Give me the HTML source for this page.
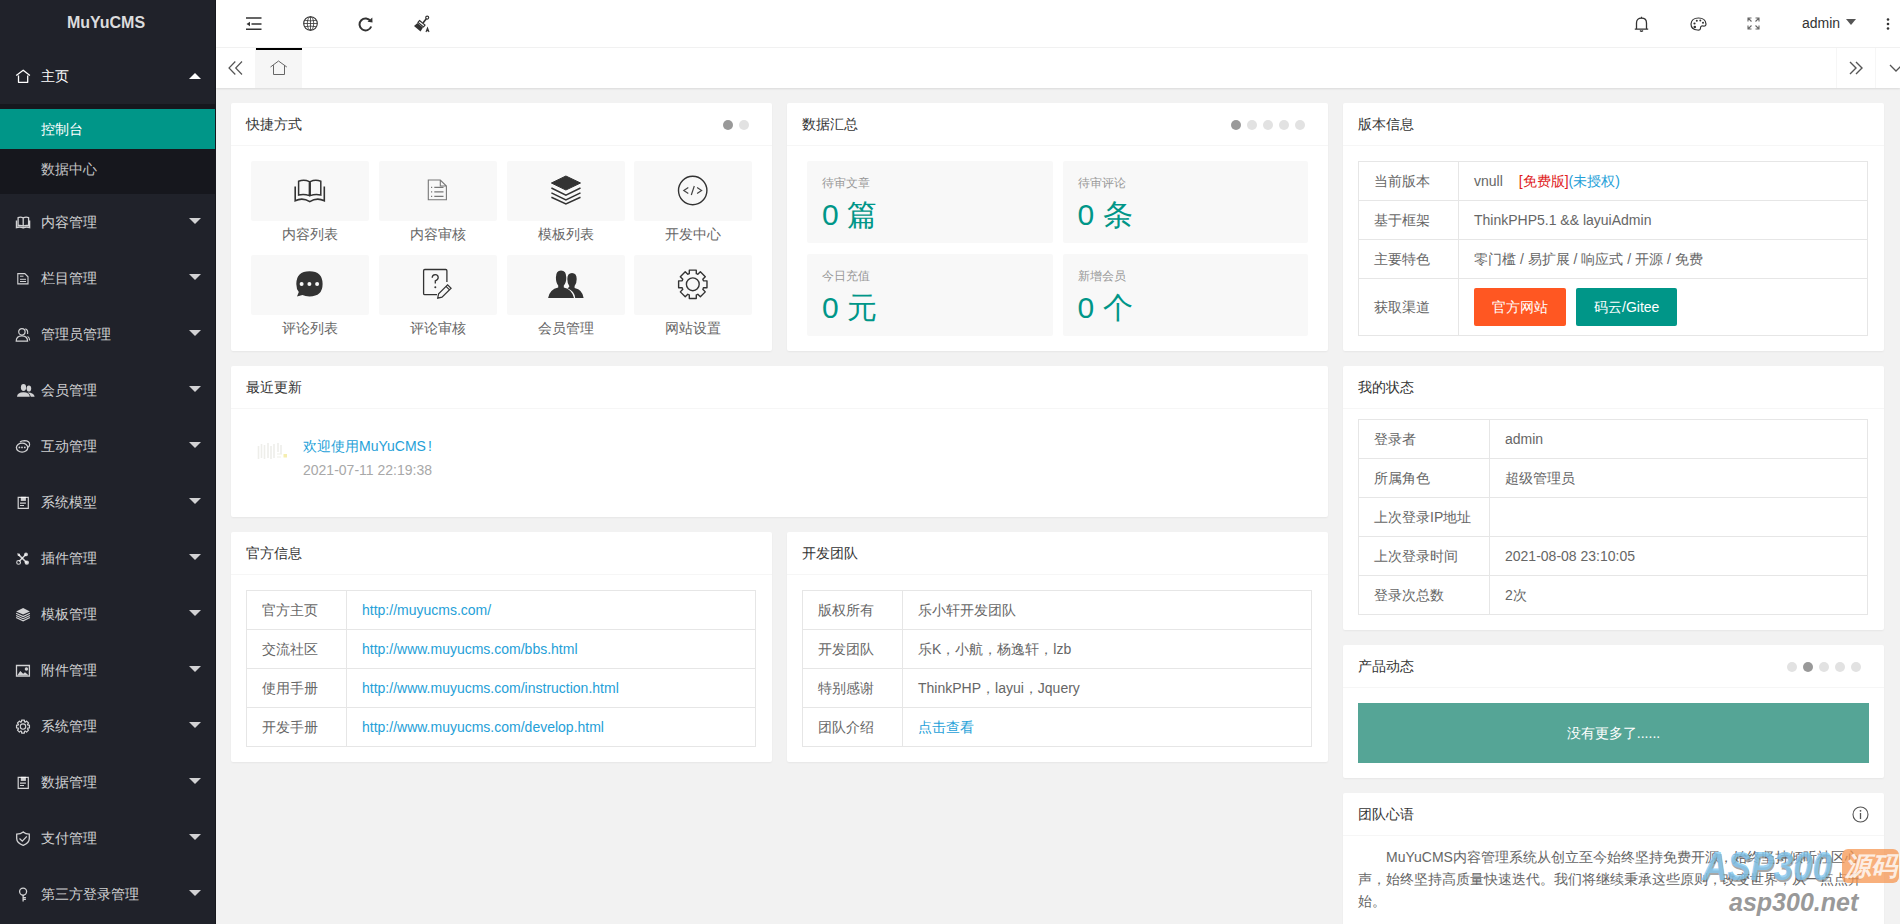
<!DOCTYPE html><html><head><meta charset="utf-8"><title>MuYuCMS</title><style>
*{margin:0;padding:0;box-sizing:border-box}
html,body{width:1900px;height:924px;overflow:hidden;background:#f2f2f2;font-family:"Liberation Sans",sans-serif;font-size:14px;color:#333}
svg{display:block}
#side{position:absolute;left:0;top:0;width:216px;height:924px;background:#20222a}
#sideedge{position:absolute;left:215px;top:0;width:1px;height:924px;background:#17181d}
#logo{position:absolute;left:0;top:0;width:212px;height:48px;line-height:45px;text-align:center;color:rgba(255,255,255,.85);font-weight:bold;font-size:16px}
.nav{position:absolute;left:0;width:215px;height:56px;line-height:56px;color:rgba(255,255,255,.8);font-size:14px}
.nav .t{position:absolute;left:41px;top:0}
.nav .ic{position:absolute;left:15px;top:21px}
.more{position:absolute;left:189px;top:24px;width:0;height:0;border-left:6px solid transparent;border-right:6px solid transparent;border-top:6px solid rgba(255,255,255,.8)}
.more.up{border-top:0;border-bottom:6px solid #fff;top:25px}
#sub{position:absolute;left:0;top:104px;width:215px;height:90px;background:#16171d}
.sub{position:absolute;left:0;width:215px;height:40px;line-height:40px;padding-left:41px;color:rgba(255,255,255,.75)}
.sub.on{background:#009688;color:#fff}
#header{position:absolute;left:216px;top:0;width:1684px;height:48px;background:#fff;border-bottom:1px solid #f2f2f2}
#tabs{position:absolute;left:216px;top:48px;width:1684px;height:40px;background:#fff;box-shadow:0 1px 2px 0 rgba(0,0,0,.1)}
.hi{position:absolute}
.card{position:absolute;background:#fff;border-radius:2px;box-shadow:0 1px 2px 0 rgba(0,0,0,.05);overflow:hidden}
.ch{position:absolute;left:0;top:0;right:0;height:43px;line-height:42px;padding-left:15px;border-bottom:1px solid #f6f6f6;color:#333;font-size:14px}
.dots{position:absolute;top:17px;height:10px}
.dots i{float:left;width:10px;height:10px;margin:0 3px;border-radius:50%;background:#e2e2e2}
.dots i.on{background:#999}
.tile{position:absolute;width:118px;height:60px;background:#f8f8f8;border-radius:2px}
.tile svg{position:absolute;left:0;top:0}
.tl{position:absolute;width:118px;text-align:center;color:#666;font-size:14px;line-height:20px}
.bl{position:absolute;width:245.5px;height:82px;background:#f8f8f8;border-radius:2px}
.bl h3{position:absolute;left:15px;top:13px;font-size:12px;font-weight:normal;color:#999;line-height:18px}
.bl p{position:absolute;left:15px;top:34px;font-size:30px;font-weight:300;color:#009688;line-height:40px}
table{position:absolute;border-collapse:collapse;table-layout:fixed}
td{border:1px solid #e6e6e6;height:39px;padding:0 15px;color:#666;font-size:14px;line-height:20px;white-space:nowrap}
a{color:#259fd8;text-decoration:none}
.btn{display:inline-block;height:38px;line-height:38px;padding:0 18px;color:#fff;border-radius:2px;font-size:14px;vertical-align:middle}
</style></head><body>
<div id="side"><div id="logo">MuYuCMS</div>
<div class="nav" style="top:48px;color:#fff"><svg class="ic" width="16" height="16" viewBox="0 0 16 16"><path d="M1.2 6.5 L8.2 1.2 L14.9 6.5 M3.5 6.6 V13.3 H12.7 V6.6" fill="none" stroke="#fff" stroke-width="1.3" stroke-linejoin="round"/></svg><span class="t">主页</span><span class="more up"></span></div>
<div id="sub"><div class="sub on" style="top:5px">控制台</div><div class="sub" style="top:45px">数据中心</div></div>
<div class="nav" style="top:194px"><svg class="ic" width="16" height="16" viewBox="0 0 16 16"><path d="M3.1 10.5 V2.6 Q5.6 1.6 8.2 2.8 V11 Q5.6 9.9 3.1 10.5 Z M8.2 2.8 Q10.9 1.6 13.6 2.6 V10.5 Q10.9 9.9 8.2 11 Z" fill="none" stroke="rgba(255,255,255,.8)" stroke-width="1.3"/><path d="M1.5 5.4 V12.6 Q5 11.4 8.2 12.9 Q11.4 11.4 14.6 12.6 V5.4" fill="none" stroke="rgba(255,255,255,.8)" stroke-width="1.4"/></svg><span class="t">内容管理</span><span class="more"></span></div>
<div class="nav" style="top:250px"><svg class="ic" width="16" height="16" viewBox="0 0 16 16"><path d="M2.8 2.6 H9.8 L13 5.8 V12.9 H2.8 Z" fill="none" stroke="rgba(255,255,255,.8)" stroke-width="1.1"/><path d="M5 5.2 H8.5 M5 8.3 H11 M5 10.5 H11" stroke="rgba(255,255,255,.8)" stroke-width="1"/></svg><span class="t">栏目管理</span><span class="more"></span></div>
<div class="nav" style="top:306px"><svg class="ic" width="16" height="16" viewBox="0 0 16 16"><circle cx="6.9" cy="4.8" r="3.2" fill="none" stroke="rgba(255,255,255,.8)" stroke-width="1.2"/><path d="M1.2 14.2 Q1.2 8.8 6.9 8.8 Q12.6 8.8 12.6 14.2 Z" fill="none" stroke="rgba(255,255,255,.8)" stroke-width="1.2"/><path d="M10.3 1.9 Q13.2 2.6 12.6 7 M12.6 9.4 Q14.6 10.6 14.6 13.4" fill="none" stroke="rgba(255,255,255,.8)" stroke-width="1.1"/></svg><span class="t">管理员管理</span><span class="more"></span></div>
<div class="nav" style="top:362px"><svg class="ic" width="20" height="16" viewBox="0 0 20 16"><ellipse cx="8.5" cy="4.5" rx="2.6" ry="3.4" fill="rgba(255,255,255,.8)"/><path d="M2 13.8 Q2.3 9.5 8.5 9.3 Q14.5 9.5 14.8 13.8 Z" fill="rgba(255,255,255,.8)"/><ellipse cx="13.9" cy="5.5" rx="2.3" ry="3.1" fill="rgba(255,255,255,.8)"/><path d="M12.5 9.6 Q19.3 9.8 19.6 13.8 H15.8 Q15.5 10.8 12.5 9.6 Z" fill="rgba(255,255,255,.8)"/></svg><span class="t">会员管理</span><span class="more"></span></div>
<div class="nav" style="top:418px"><svg class="ic" width="16" height="16" viewBox="0 0 16 16"><ellipse cx="7.1" cy="8.6" rx="5.7" ry="4.5" fill="none" stroke="rgba(255,255,255,.8)" stroke-width="1.3"/><path d="M5 3 Q6.5 1.6 9.5 1.6 Q14.6 1.8 14.6 5.4 Q14.6 7 13.3 8.2" fill="none" stroke="rgba(255,255,255,.8)" stroke-width="1.2"/><circle cx="4.4" cy="8.4" r=".9" fill="rgba(255,255,255,.8)"/><circle cx="7" cy="8.4" r=".9" fill="rgba(255,255,255,.8)"/><circle cx="9.8" cy="8.4" r=".9" fill="rgba(255,255,255,.8)"/></svg><span class="t">互动管理</span><span class="more"></span></div>
<div class="nav" style="top:474px"><svg class="ic" width="16" height="16" viewBox="0 0 16 16"><path d="M3.2 2.4 H13.3 V13.4 H3.2 Z" fill="none" stroke="rgba(255,255,255,.8)" stroke-width="1.2"/><path d="M5.8 1.8 H10.9 V5.9 H5.8 Z" fill="rgba(255,255,255,.8)"/><path d="M5 8.1 H10.9 M5 10.5 H9" stroke="rgba(255,255,255,.8)" stroke-width="1.1"/></svg><span class="t">系统模型</span><span class="more"></span></div>
<div class="nav" style="top:530px"><svg class="ic" width="16" height="16" viewBox="0 0 16 16"><path d="M3.6 3.6 L11.8 11.8" stroke="rgba(255,255,255,.8)" stroke-width="1.6"/><path d="M2.2 2.2 L4.8 2.8 L5.2 5.2 L2.8 4.8 Z" fill="rgba(255,255,255,.8)"/><circle cx="11.8" cy="11.6" r="2.2" fill="rgba(255,255,255,.8)"/><path d="M10.8 3.6 L4 10.6" stroke="rgba(255,255,255,.8)" stroke-width="1.5"/><circle cx="11" cy="3.4" r="1.9" fill="rgba(255,255,255,.8)"/><circle cx="3.6" cy="11.4" r="1.9" fill="none" stroke="rgba(255,255,255,.8)" stroke-width="1.1"/></svg><span class="t">插件管理</span><span class="more"></span></div>
<div class="nav" style="top:586px"><svg class="ic" width="16" height="16" viewBox="0 0 16 16"><path d="M8.1 0.9 L14.9 4.4 L8.1 7.6 L1.1 4.4 Z" fill="rgba(255,255,255,.8)"/><path d="M1.1 6.3 L8.1 9.6 L14.9 6.3 M1.1 8.4 L8.1 11.7 L14.9 8.4 M1.1 10.6 L8.1 13.8 L14.9 10.6" fill="none" stroke="rgba(255,255,255,.8)" stroke-width="1.1"/></svg><span class="t">模板管理</span><span class="more"></span></div>
<div class="nav" style="top:642px"><svg class="ic" width="16" height="16" viewBox="0 0 16 16"><path d="M1.5 2.5 H14.4 V13.2 H1.5 Z" fill="none" stroke="rgba(255,255,255,.8)" stroke-width="1.3"/><path d="M2.2 12.5 L5.3 7.9 L8.2 10.8 L10 9.2 L13.8 12.5 Z" fill="rgba(255,255,255,.8)"/><circle cx="11.4" cy="6" r="1.7" fill="rgba(255,255,255,.8)"/></svg><span class="t">附件管理</span><span class="more"></span></div>
<div class="nav" style="top:698px"><svg class="ic" width="16" height="16" viewBox="0 0 16 16"><path d="M6.09 2.98 L6.52 2.82 L6.62 1.14 L9.38 1.14 L9.48 2.82 L9.91 2.98 L10.33 3.18 L11.59 2.06 L13.54 4.01 L12.42 5.27 L12.62 5.69 L12.78 6.12 L14.46 6.22 L14.46 8.98 L12.78 9.08 L12.62 9.51 L12.42 9.93 L13.54 11.19 L11.59 13.14 L10.33 12.02 L9.91 12.22 L9.48 12.38 L9.38 14.06 L6.62 14.06 L6.52 12.38 L6.09 12.22 L5.67 12.02 L4.41 13.14 L2.46 11.19 L3.58 9.93 L3.38 9.51 L3.22 9.08 L1.54 8.98 L1.54 6.22 L3.22 6.12 L3.38 5.69 L3.58 5.27 L2.46 4.01 L4.41 2.06 L5.67 3.18 Z" fill="none" stroke="rgba(255,255,255,.8)" stroke-width="1.2" stroke-linejoin="round"/><circle cx="8" cy="7.6" r="2.7" fill="none" stroke="rgba(255,255,255,.8)" stroke-width="1.1"/></svg><span class="t">系统管理</span><span class="more"></span></div>
<div class="nav" style="top:754px"><svg class="ic" width="16" height="16" viewBox="0 0 16 16"><path d="M3.2 2.4 H13.3 V13.4 H3.2 Z" fill="none" stroke="rgba(255,255,255,.8)" stroke-width="1.2"/><path d="M5.8 1.8 H10.9 V5.9 H5.8 Z" fill="rgba(255,255,255,.8)"/><path d="M5 8.1 H10.9 M5 10.5 H9" stroke="rgba(255,255,255,.8)" stroke-width="1.1"/></svg><span class="t">数据管理</span><span class="more"></span></div>
<div class="nav" style="top:810px"><svg class="ic" width="16" height="16" viewBox="0 0 16 16"><path d="M8.2 0.9 Q10.5 3 14.3 3.2 V7.5 Q14.3 12 8.2 14.4 Q1.7 12 1.7 7.5 V3.2 Q5.8 3 8.2 0.9 Z" fill="none" stroke="rgba(255,255,255,.8)" stroke-width="1.3"/><path d="M4.5 7.6 L7.3 10.2 L11.8 5.4" fill="none" stroke="rgba(255,255,255,.8)" stroke-width="1.3"/></svg><span class="t">支付管理</span><span class="more"></span></div>
<div class="nav" style="top:866px"><svg class="ic" width="16" height="16" viewBox="0 0 16 16"><circle cx="8.1" cy="4.6" r="3.5" fill="none" stroke="rgba(255,255,255,.8)" stroke-width="1.3"/><path d="M8.1 8.1 V14.6 M8.1 10.6 H10.9 M8.1 12.4 H10.9" stroke="rgba(255,255,255,.8)" stroke-width="1.3"/></svg><span class="t">第三方登录管理</span><span class="more"></span></div>
<div id="sideedge"></div></div>
<div id="header">
<svg class="hi" style="left:30px;top:16px" width="16" height="14" viewBox="0 0 16 14"><path d="M0 2 H15.5 M5.5 8 H15.5 M0 13.3 H15.5" stroke="#333" stroke-width="1.6"/><path d="M0.5 8 L4 5.7 V10.3 Z" fill="#333"/></svg>
<svg class="hi" style="left:87px;top:16px" width="15" height="15" viewBox="0 0 15 15"><circle cx="7.5" cy="7.5" r="6.8" fill="none" stroke="#333" stroke-width="1.1"/><ellipse cx="7.5" cy="7.5" rx="3.2" ry="6.8" fill="none" stroke="#333" stroke-width=".8"/><path d="M7.5 0.8 V14.2 M0.8 7.5 H14.2 M1.8 4.3 Q7.5 5.5 13.2 4.3 M1.8 10.7 Q7.5 9.5 13.2 10.7" fill="none" stroke="#333" stroke-width=".8"/></svg>
<svg class="hi" style="left:142px;top:17px" width="16" height="15" viewBox="0 0 16 15"><path d="M12.6 4.2 A6 6 0 1 0 13.2 9.5" fill="none" stroke="#333" stroke-width="2"/><path d="M9.5 4.8 L14.5 5.5 L14.3 0.5 Z" fill="#333"/></svg>
<svg class="hi" style="left:197px;top:15px" width="18" height="18" viewBox="0 0 18 18"><circle cx="14.2" cy="2.6" r="1.5" fill="none" stroke="#333" stroke-width="1.1"/><path d="M13.3 3.8 L10 8" stroke="#333" stroke-width="1.6"/><path d="M6.5 5.5 L12 10 L10.5 12 L5 7.5 Z" fill="none" stroke="#333" stroke-width="1.2"/><path d="M4.5 8 L10 12.5 L7.5 16.5 L1 11 Z" fill="#333"/><path d="M13 17 L14.5 13 L16 17 M13.6 15.6 H15.4" fill="none" stroke="#333" stroke-width="1.1"/></svg>
<svg class="hi" style="left:1418px;top:16px" width="15" height="16" viewBox="0 0 15 16"><path d="M2.5 13 V7 Q2.5 2.2 7.5 2.2 Q12.5 2.2 12.5 7 V13 M0.8 13.2 H14.2" fill="none" stroke="#333" stroke-width="1.3"/><path d="M7.5 0.8 V2.2 M6 14.5 Q7.5 16 9 14.5" fill="none" stroke="#333" stroke-width="1.2"/></svg>
<svg class="hi" style="left:1474px;top:17px" width="17" height="14" viewBox="0 0 17 14"><path d="M8.5 1 Q15.5 1 16 7 Q16 9.5 13 9 Q10.5 8.7 10.5 11 Q10.5 13.3 7.5 13 Q1 12.5 1 7 Q1.5 1 8.5 1 Z" fill="none" stroke="#333" stroke-width="1.2"/><circle cx="4.5" cy="6.5" r="1.1" fill="#333"/><circle cx="6.8" cy="3.8" r="1" fill="#333"/><circle cx="10.3" cy="3.6" r="1" fill="#333"/><circle cx="13" cy="5.8" r="1" fill="#333"/><circle cx="4.8" cy="10" r="1.3" fill="#333"/></svg>
<svg class="hi" style="left:1531px;top:17px" width="13" height="13" viewBox="0 0 13 13"><path d="M1 4.5 V1 H4.5 M1 1 L4.5 4.5 M8.5 1 H12 V4.5 M12 1 L8.5 4.5 M1 8.5 V12 H4.5 M1 12 L4.5 8.5 M8.5 12 H12 V8.5 M12 12 L8.5 8.5" fill="none" stroke="#666" stroke-width="1.1"/></svg>
<span class="hi" style="left:1586px;top:14px;line-height:18px;color:#333;font-size:14px">admin</span>
<span class="hi" style="left:1630px;top:19px;width:0;height:0;border-left:5.5px solid transparent;border-right:5.5px solid transparent;border-top:6px solid #555"></span>
<svg class="hi" style="left:1670px;top:17px" width="4" height="14" viewBox="0 0 4 14"><circle cx="2" cy="2.5" r="1.3" fill="#333"/><circle cx="2" cy="7" r="1.3" fill="#333"/><circle cx="2" cy="11.5" r="1.3" fill="#333"/></svg>
</div>
<div id="tabs">
<div class="hi" style="left:0;top:0;width:40px;height:40px;border-right:1px solid #f6f6f6"></div>
<svg class="hi" style="left:12px;top:12px" width="15" height="15" viewBox="0 0 15 15"><path d="M7.3 1.5 L1 8 L7.3 14.5 M14 1.5 L7.7 8 L14 14.5" fill="none" stroke="#555" stroke-width="1.2"/></svg>
<div class="hi" style="left:40px;top:0;width:46px;height:40px;background:#f6f6f6;border-top:2px solid #000"></div>
<svg class="hi" style="left:53px;top:11px" width="20" height="17" viewBox="0 0 20 17"><path d="M1.5 8 L9.5 2 L17.8 8 M4.5 6.2 V15.5 H15.5 V6.2" fill="none" stroke="#666" stroke-width="1"/></svg>
<div class="hi" style="left:1620px;top:0;width:40px;height:40px;border-left:1px solid #f6f6f6;border-right:1px solid #f6f6f6"></div>
<svg class="hi" style="left:1633px;top:13px" width="14" height="14" viewBox="0 0 14 14"><path d="M1 1 L7 7 L1 13 M7 1 L13 7 L7 13" fill="none" stroke="#555" stroke-width="1.4"/></svg>
<svg class="hi" style="left:1673px;top:16px" width="14" height="8" viewBox="0 0 14 8"><path d="M1 1 L7 7 L13 1" fill="none" stroke="#555" stroke-width="1.3"/></svg>
</div>
<div class="card" style="left:231px;top:103px;width:541px;height:248px"><div class="ch">快捷方式</div><div class="dots" style="right:20px"><i class="on"></i><i></i></div><div class="tile" style="left:20.00px;top:58px"><svg width="118" height="60" viewBox="0 0 118 60"><path d="M47.6 34 V20.3 Q53 18.3 58.4 20.6 V34.6 Q53 32.6 47.6 34 Z M59.2 20.6 Q64.5 18.3 69.8 20.3 V34 Q64.5 32.6 59.2 34.6 Z" fill="none" stroke="#333" stroke-width="1.5"/><path d="M44.2 25.4 V39.8 Q51.5 36.2 58.8 40.6 Q66 36.2 73.3 39.8 V25.4" fill="none" stroke="#333" stroke-width="1.6"/></svg></div><div class="tl" style="left:20.00px;top:121px">内容列表</div><div class="tile" style="left:147.75px;top:58px"><svg width="118" height="60" viewBox="0 0 118 60"><path d="M49.3 19 H61.3 L67.4 25 V38.8 H49.3 Z M61.3 19 V25 H67.4" fill="none" stroke="#777" stroke-width="1.1"/><path d="M52 26.3 H53.2 M55.3 26.3 H64.5 M52 30.9 H53.2 M55.3 30.9 H64.5 M52 35.4 H53.2 M55.3 35.4 H64.5" stroke="#777" stroke-width="1.2"/></svg></div><div class="tl" style="left:147.75px;top:121px">内容审核</div><div class="tile" style="left:275.50px;top:58px"><svg width="118" height="60" viewBox="0 0 118 60"><path d="M58.9 15 L73.5 22 L58.9 29 L44.4 22 Z" fill="#333" stroke="#333" stroke-width="1" stroke-linejoin="round"/><path d="M44.4 27 L58.9 34.2 L73.5 27 M44.4 31.8 L58.9 39 L73.5 31.8 M44.4 36.2 L58.9 43 L73.5 36.2" fill="none" stroke="#333" stroke-width="1.5"/></svg></div><div class="tl" style="left:275.50px;top:121px">模板列表</div><div class="tile" style="left:403.25px;top:58px"><svg width="118" height="60" viewBox="0 0 118 60"><circle cx="58.7" cy="29.5" r="14.2" fill="none" stroke="#333" stroke-width="1.4"/><path d="M54.3 26.5 L49.8 29.5 L54.3 32.5 M63.1 26.5 L67.6 29.5 L63.1 32.5 M60.3 25 L57.3 34" fill="none" stroke="#444" stroke-width="1.2"/></svg></div><div class="tl" style="left:403.25px;top:121px">开发中心</div><div class="tile" style="left:20.00px;top:152px"><svg width="118" height="60" viewBox="0 0 118 60"><path d="M58.5 16.2 Q71.6 16.2 71.6 29 Q71.6 41.4 58.5 41.4 Q54 41.4 51.5 40 L46 41.6 L47.8 37 Q45.3 34 45.3 29 Q45.3 16.2 58.5 16.2 Z" fill="#333"/><circle cx="50.6" cy="29" r="2" fill="#f8f8f8"/><circle cx="58.4" cy="29" r="2" fill="#f8f8f8"/><circle cx="66.1" cy="29" r="2" fill="#f8f8f8"/></svg></div><div class="tl" style="left:20.00px;top:215px">评论列表</div><div class="tile" style="left:147.75px;top:152px"><svg width="118" height="60" viewBox="0 0 118 60"><path d="M58 39.6 H45.8 Q44.6 39.6 44.6 38.4 V15.7 Q44.6 14.5 45.8 14.5 H66.7 Q67.9 14.5 67.9 15.7 V27" fill="none" stroke="#333" stroke-width="1.3"/><path d="M53.2 22.8 Q53.2 19.6 56.2 19.6 Q59.2 19.6 59.2 22.5 Q59.2 24.6 56.3 25.8 V28.6" fill="none" stroke="#333" stroke-width="1.3"/><circle cx="56.3" cy="32.2" r="1" fill="#333"/><path d="M58.7 43.1 L59.6 38.8 L68.6 29.8 L72.1 33.3 L63 42.2 Z M67 31.4 L70.5 34.9" fill="none" stroke="#333" stroke-width="1.2"/></svg></div><div class="tl" style="left:147.75px;top:215px">评论审核</div><div class="tile" style="left:275.50px;top:152px"><svg width="118" height="60" viewBox="0 0 118 60"><path d="M54 15.4 Q59.3 15.4 59.3 22.5 Q59.3 28 56.8 30.5 V32.6 Q65 34.5 67 43.1 H41.1 Q42.6 34.5 51.2 32.6 V30.5 Q48.9 28 48.9 22.5 Q48.9 15.4 54 15.4 Z" fill="#333"/><path d="M65 17.9 Q69.7 17.9 69.7 24 Q69.7 28.8 67.6 31 V33 Q75.8 34.8 76.6 43.1 H68.2 Q67.5 36 60.5 33.3 Q61.8 32.6 62.4 31.3 Q60.3 28.8 60.3 24 Q60.3 17.9 65 17.9 Z" fill="#333"/></svg></div><div class="tl" style="left:275.50px;top:215px">会员管理</div><div class="tile" style="left:403.25px;top:152px"><svg width="118" height="60" viewBox="0 0 118 60"><path d="M54.51 18.95 L55.28 18.67 L55.33 15.12 L62.27 15.12 L62.32 18.67 L63.09 18.95 L63.83 19.29 L66.37 16.82 L71.28 21.73 L68.81 24.27 L69.15 25.01 L69.43 25.78 L72.98 25.83 L72.98 32.77 L69.43 32.82 L69.15 33.59 L68.81 34.33 L71.28 36.87 L66.37 41.78 L63.83 39.31 L63.09 39.65 L62.32 39.93 L62.27 43.48 L55.33 43.48 L55.28 39.93 L54.51 39.65 L53.77 39.31 L51.23 41.78 L46.32 36.87 L48.79 34.33 L48.45 33.59 L48.17 32.82 L44.62 32.77 L44.62 25.83 L48.17 25.78 L48.45 25.01 L48.79 24.27 L46.32 21.73 L51.23 16.82 L53.77 19.29 Z" fill="none" stroke="#333" stroke-width="1.4" stroke-linejoin="round"/><circle cx="58.8" cy="29.3" r="6.4" fill="none" stroke="#333" stroke-width="1.4"/></svg></div><div class="tl" style="left:403.25px;top:215px">网站设置</div></div>
<div class="card" style="left:787px;top:103px;width:541px;height:248px"><div class="ch">数据汇总</div><div class="dots" style="right:20px"><i class="on"></i><i></i><i></i><i></i><i></i></div><div class="bl" style="left:20.0px;top:58px"><h3>待审文章</h3><p>0 篇</p></div><div class="bl" style="left:275.5px;top:58px"><h3>待审评论</h3><p>0 条</p></div><div class="bl" style="left:20.0px;top:151px"><h3>今日充值</h3><p>0 元</p></div><div class="bl" style="left:275.5px;top:151px"><h3>新增会员</h3><p>0 个</p></div></div>
<div class="card" style="left:1343px;top:103px;width:541px;height:248px"><div class="ch">版本信息</div><table style="left:15px;top:58px;width:510px"><colgroup><col style="width:100px"><col></colgroup><tr><td>当前版本</td><td>vnull<span style="margin-left:16px;color:#e02020">[免费版]</span><span style="color:#259fd8">(未授权)</span></td></tr><tr><td>基于框架</td><td>ThinkPHP5.1 &amp;&amp; layuiAdmin</td></tr><tr><td>主要特色</td><td>零门槛 / 易扩展 / 响应式 / 开源 / 免费</td></tr><tr><td style="height:57px">获取渠道</td><td><span class="btn" style="background:#ff5722">官方网站</span><span class="btn" style="background:#009688;margin-left:10px">码云/Gitee</span></td></tr></table></div>
<div class="card" style="left:231px;top:366px;width:1097px;height:151px"><div class="ch">最近更新</div><svg style="position:absolute;left:26px;top:74px" width="32" height="22" viewBox="0 0 32 22"><path d="M1.5 6 V19 M4.5 4 V18 M7.5 5 V19 M11 3 V18 M14 6 V19 M17 4 V18 M21 3 V12 M24 5 V14" stroke="#eeeeea" stroke-width="1.6"/><path d="M20 14 H25 M20 17 H24" stroke="#f0f0e8" stroke-width="1.2"/><rect x="26.5" y="14" width="3.5" height="3.5" fill="#f5eeb0"/></svg><a style="position:absolute;left:72px;top:70px;line-height:20px;font-size:14px">欢迎使用MuYuCMS<span style="margin-left:2px">!</span></a><div style="position:absolute;left:72px;top:94px;line-height:20px;color:#a8a8a8;font-size:14px">2021-07-11 22:19:38</div></div>
<div class="card" style="left:231px;top:532px;width:541px;height:230px"><div class="ch">官方信息</div><table style="left:15px;top:58px;width:510px"><colgroup><col style="width:100px"><col></colgroup><tr><td>官方主页</td><td><a>http://muyucms.com/</a></td></tr><tr><td>交流社区</td><td><a>http://www.muyucms.com/bbs.html</a></td></tr><tr><td>使用手册</td><td><a>http://www.muyucms.com/instruction.html</a></td></tr><tr><td>开发手册</td><td><a>http://www.muyucms.com/develop.html</a></td></tr></table></div>
<div class="card" style="left:787px;top:532px;width:541px;height:230px"><div class="ch">开发团队</div><table style="left:15px;top:58px;width:510px"><colgroup><col style="width:100px"><col></colgroup><tr><td>版权所有</td><td>乐小轩开发团队</td></tr><tr><td>开发团队</td><td>乐K，小航，杨逸轩，lzb</td></tr><tr><td>特别感谢</td><td>ThinkPHP，layui，Jquery</td></tr><tr><td>团队介绍</td><td><a>点击查看</a></td></tr></table></div>
<div class="card" style="left:1343px;top:366px;width:541px;height:264px"><div class="ch">我的状态</div><table style="left:15px;top:53px;width:510px"><colgroup><col style="width:131px"><col></colgroup><tr><td>登录者</td><td>admin</td></tr><tr><td>所属角色</td><td>超级管理员</td></tr><tr><td>上次登录IP地址</td><td></td></tr><tr><td>上次登录时间</td><td>2021-08-08 23:10:05</td></tr><tr><td>登录次总数</td><td>2次</td></tr></table></div>
<div class="card" style="left:1343px;top:645px;width:541px;height:133px"><div class="ch">产品动态</div><div class="dots" style="right:20px"><i></i><i class="on"></i><i></i><i></i><i></i></div><div style="position:absolute;left:15px;top:58px;width:511px;height:60px;background:#55a596;color:#fff;text-align:center;line-height:60px;font-size:14px">没有更多了......</div></div>
<div class="card" style="left:1343px;top:793px;width:541px;height:200px"><div class="ch">团队心语</div><svg style="position:absolute;left:509px;top:13px" width="17" height="17" viewBox="0 0 17 17"><circle cx="8.5" cy="8.5" r="7.5" fill="none" stroke="#555" stroke-width="1.1"/><path d="M8.5 7 V13" stroke="#555" stroke-width="1.3"/><circle cx="8.5" cy="4.8" r=".9" fill="#555"/></svg><div style="position:absolute;left:15px;top:53px;width:511px;line-height:22px;color:#666;font-size:14px;text-indent:28px">MuYuCMS内容管理系统从创立至今始终坚持免费开源，始终坚持倾听社区心声，始终坚持高质量快速迭代。我们将继续秉承这些原则，改变世界，从一点点开始。</div></div>
<div style="position:absolute;left:1842px;top:849px;width:57px;height:34px;background:rgba(245,150,80,.75);border-radius:6px;color:rgba(255,255,255,.8);font-size:26px;line-height:34px;font-weight:bold;font-style:italic;overflow:hidden;padding-left:3px">源码</div>
<div style="position:absolute;left:1702px;top:844px;color:rgba(130,200,240,.8);font-size:40px;line-height:44px;font-weight:bold;font-style:italic;transform:scaleX(.87);transform-origin:0 0;text-shadow:1px 2px 0 rgba(90,90,90,.55)">ASP300</div>
<div style="position:absolute;left:1729px;top:887px;color:#999;font-size:25px;line-height:30px;font-weight:bold;font-style:italic">asp300.net</div>
</body></html>
